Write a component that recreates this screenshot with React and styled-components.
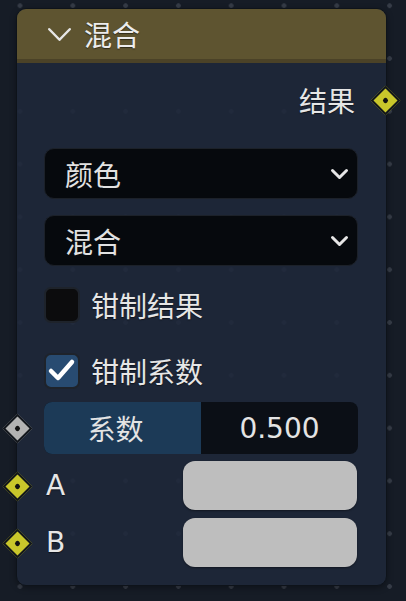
import React from 'react';
import styled, { createGlobalStyle } from 'styled-components';

const GlobalStyle = createGlobalStyle`
	html, body {
		margin: 0;
		height: 100%;
	}
	body {
		background-color: #161c26;
		background-image: radial-gradient(circle, #363c47 0, #363c47 2px, transparent 2.6px);
		background-size: 52.8px 52.8px;
		background-position: -6.4px -20.7px;
		font-family: 'DejaVu Sans', 'Noto Sans CJK SC', sans-serif;
		color: #e6e6e6;
	}
`;

const Page = styled.div`
	padding: 8px 0 0 16px;
`;

const Node = styled.div`
	position: relative;
	width: 369px;
	height: 576px;
	border: 1px solid #0e131a;
	border-radius: 10px;
	background: rgba(30, 40, 58, 0.86);
	box-shadow: 0 2px 6px rgba(0, 0, 0, 0.35);
	display: flex;
	flex-direction: column;
`;

const Header = styled.div`
	height: 50px;
	border-bottom: 4px solid #4b4227;
	border-radius: 9px 9px 0 0;
	background: #5e5430;
	display: flex;
	align-items: center;
	padding-left: 30px;
	gap: 12px;
	font-size: 28px;
	color: #ececec;
	text-shadow: 0 1px 1px rgba(0, 0, 0, 0.5);
`;

const Body = styled.div`
	display: flex;
	flex-direction: column;
	padding: 0 28px 0 27px;
`;

const OutputRow = styled.div`
	position: relative;
	height: 40px;
	margin-top: 17px;
	margin-right: -28px;
	padding-right: 31px;
	display: flex;
	align-items: center;
	justify-content: flex-end;
	font-size: 28px;
	text-shadow: 0 1px 1px rgba(0, 0, 0, 0.5);
`;

const Socket = styled.span`
	position: absolute;
	top: 50%;
	${(p) => (p.$side === 'right' ? 'right: -10px;' : 'left: -37px;')}
	width: 17px;
	height: 17px;
	margin-top: -10px;
	transform: rotate(45deg);
	background: ${(p) => p.$color};
	border: 2px solid #12161c;
	display: flex;
	align-items: center;
	justify-content: center;

	&::after {
		content: '';
		width: 5px;
		height: 5px;
		border-radius: 50%;
		background: #121212;
	}
`;

const Dropdown = styled.div`
	height: 49px;
	margin-top: ${(p) => p.$mt}px;
	border: 1px solid #1c2129;
	border-radius: 10px;
	background: #06090d;
	display: flex;
	align-items: center;
	justify-content: space-between;
	padding: 0 8px 0 20px;
	font-size: 28px;
	color: #e2e2e2;
`;

const CheckRow = styled.div`
	height: 36px;
	margin-top: ${(p) => p.$mt}px;
	display: flex;
	align-items: center;
	gap: 11px;
	font-size: 28px;
	text-shadow: 0 1px 1px rgba(0, 0, 0, 0.5);
`;

const Box = styled.span`
	box-sizing: border-box;
	width: 36px;
	height: 36px;
	border: 2px solid #1e232b;
	border-radius: 7px;
	background: ${(p) => (p.$checked ? '#284b71' : '#0c0c0d')};
	display: flex;
	align-items: center;
	justify-content: center;
`;

const Slider = styled.div`
	position: relative;
	height: 52px;
	margin-top: 13px;
	border-radius: 8px;
	background: #0b0f16;
	display: grid;
	grid-template-columns: 1fr 1fr;
	font-size: 28px;
	color: #e4e4e4;
`;

const SliderFill = styled.div`
	border-radius: 8px 0 0 8px;
	background: #1c3a57;
	display: flex;
	align-items: center;
	justify-content: center;
	padding-right: 14px;
`;

const SliderValue = styled.div`
	display: flex;
	align-items: center;
	justify-content: center;
`;

const ColorRow = styled.div`
	position: relative;
	height: 49px;
	margin-top: ${(p) => p.$mt}px;
	display: flex;
	align-items: center;
	justify-content: space-between;
	padding-left: 2px;
	font-size: 28px;
	text-shadow: 0 1px 1px rgba(0, 0, 0, 0.5);
`;

const Swatch = styled.div`
	width: 174px;
	height: 49px;
	margin-right: 1px;
	border-radius: 12px;
	background: ${(p) => p.$color};
	box-shadow: 0 1px 2px rgba(0, 0, 0, 0.4);
`;

const Chevron = ({ w, h, sw }) => (
	<svg width={w} height={h} viewBox={`0 0 ${w} ${h}`}>
		<polyline
			points={`${sw / 2 + 1},${sw / 2 + 1} ${w / 2},${h - sw / 2 - 1} ${w - sw / 2 - 1},${sw / 2 + 1}`}
			fill="none"
			stroke="#e6e6e6"
			strokeWidth={sw}
			strokeLinecap="round"
			strokeLinejoin="round"
		/>
	</svg>
);

const Check = () => (
	<svg width="32" height="32" viewBox="0 0 32 32">
		<polyline
			points="5,16 12,23 26,7"
			fill="none"
			stroke="#ffffff"
			strokeWidth="4.5"
			strokeLinecap="round"
			strokeLinejoin="round"
		/>
	</svg>
);

const App = () => (
	<Page>
		<GlobalStyle />
		<Node>
			<Header>
				<Chevron w={25} h={15} sw={2.5} />
				<span>混合</span>
			</Header>
			<Body>
				<OutputRow>
					结果
					<Socket $side="right" $color="#c9c72b" />
				</OutputRow>
				<Dropdown $mt={28}>
					颜色
					<Chevron w={19} h={12} sw={3} />
				</Dropdown>
				<Dropdown $mt={16}>
					混合
					<Chevron w={19} h={12} sw={3} />
				</Dropdown>
				<CheckRow $mt={21}>
					<Box />
					钳制结果
				</CheckRow>
				<CheckRow $mt={30}>
					<Box $checked>
						<Check />
					</Box>
					钳制系数
				</CheckRow>
				<Slider>
					<Socket $side="left" $color="#b3b3b3" />
					<SliderFill>系数</SliderFill>
					<SliderValue>0.500</SliderValue>
				</Slider>
				<ColorRow $mt={7}>
					<Socket $side="left" $color="#c9c72b" />
					A
					<Swatch $color="#bebebe" />
				</ColorRow>
				<ColorRow $mt={8}>
					<Socket $side="left" $color="#c9c72b" />
					B
					<Swatch $color="#bebebe" />
				</ColorRow>
			</Body>
		</Node>
	</Page>
);

export default App;
